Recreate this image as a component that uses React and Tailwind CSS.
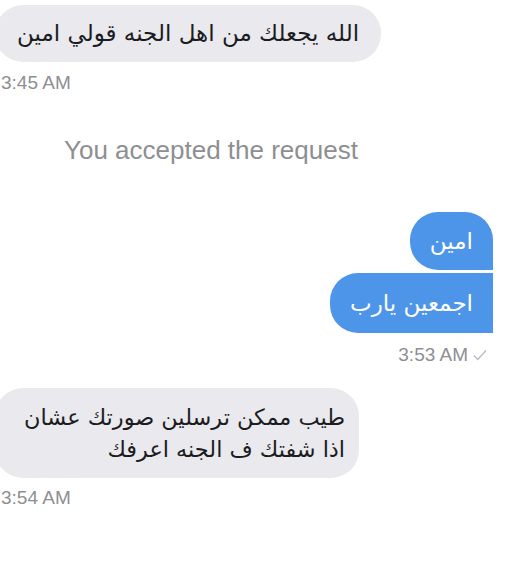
export default function App() {
  return (
    <div className="w-[515px] h-[575px] bg-white overflow-hidden flex flex-col font-['Liberation_Sans',Arial,sans-serif]">
      <div className="pt-[5px] -ml-[5px] flex flex-col items-start">
        <div dir="rtl" className="h-[57px] rounded-[28px] bg-[#e9e9ee] pl-[22px] pr-[22px] flex items-center text-[23px] text-[#1c1c1e] font-['DejaVu_Sans',sans-serif]">
          الله يجعلك من اهل الجنه قولي امين
        </div>
        <div className="mt-[10px] pl-[6px] text-[19px] leading-[22px] text-[#8e8e93]">3:45 AM</div>
      </div>
      <div className="mt-[41px] pl-[64px] text-[26px] leading-[30px] text-[#8e8e93]">
        You accepted the request
      </div>
      <div className="mt-[47px] pr-[22px] flex flex-col items-end gap-[3px]">
        <div dir="rtl" className="h-[58px] rounded-[28px] rounded-br-none bg-[#4c95e8] px-[20px] flex items-center text-[23px] text-white font-['DejaVu_Sans',sans-serif]">
          امين
        </div>
        <div dir="rtl" className="h-[60px] rounded-[28px] rounded-tr-none rounded-br-none bg-[#4c95e8] px-[20px] flex items-center text-[23px] text-white font-['DejaVu_Sans',sans-serif]">
          اجمعين يارب
        </div>
        <div className="mt-[8px] pr-[6px] flex items-center gap-[5px] text-[19px] leading-[22px] text-[#8e8e93]">
          <span>3:53 AM</span>
          <svg width="14" height="12" viewBox="0 0 14 12" fill="none" stroke="#b8b8bf" strokeWidth="1.2">
            <path d="M1 6.5 L4.8 10.5 L13 1.5" />
          </svg>
        </div>
      </div>
      <div className="mt-[22px] -ml-[5px] flex flex-col items-start">
        <div dir="rtl" className="rounded-[28px] bg-[#e9e9ee] pl-[29px] pr-[14px] py-[13px] text-[22.4px] leading-[32px] text-[#1c1c1e] font-['DejaVu_Sans',sans-serif]">
          <div>طيب ممكن ترسلين صورتك عشان</div>
          <div>اذا شفتك ف الجنه اعرفك</div>
        </div>
        <div className="mt-[9px] pl-[6px] text-[19px] leading-[22px] text-[#8e8e93]">3:54 AM</div>
      </div>
    </div>
  );
}
